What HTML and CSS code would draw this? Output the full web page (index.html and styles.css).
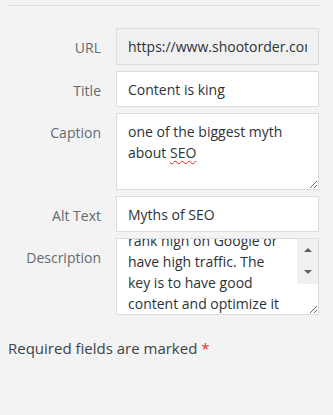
FILE: index.html
```html
<!DOCTYPE html>
<html lang="en">
<head>
    <meta charset="UTF-8">
    <meta name="viewport" content="width=device-width, initial-scale=1.0">
    <title>Attachment Details</title>
    <link rel="stylesheet" href="styles.css">
</head>
<body>
    <div class="settings">
        <div class="setting">
            <label class="name" for="url">URL</label>
            <input type="text" id="url" class="field field-readonly" value="https://www.shootorder.com/wp-content/uploads/myths-of-seo.jpg" readonly>
        </div>
        <div class="setting">
            <label class="name" for="title">Title</label>
            <input type="text" id="title" class="field" value="Content is king">
        </div>
        <div class="setting">
            <label class="name" for="caption">Caption</label>
            <div id="caption" class="field field-area">one of the biggest myth about <span class="typo">SEO</span></div>
        </div>
        <div class="setting">
            <label class="name" for="alt">Alt Text</label>
            <input type="text" id="alt" class="field" value="Myths of SEO">
        </div>
        <div class="setting">
            <label class="name" for="description">Description</label>
            <div class="field field-box">
                <textarea id="description" class="field-text">Stuffing keywords will not make your website rank high on Google or have high traffic. The key is to have good content and optimize it for search engines.</textarea>
                <div class="scrollbar">
                    <div class="scroll-track">
                        <span class="arrow arrow-up"></span>
                        <span class="arrow arrow-down"></span>
                    </div>
                </div>
            </div>
        </div>
    </div>

    <p class="required">Required fields are marked <span class="star">*</span></p>

    <script src="script.js"></script>
</body>
</html>
```

FILE: styles.css
```css
* {
    box-sizing: border-box;
}

body {
    margin: 0;
    background-color: #f3f3f3;
    font-family: 'Open Sans', sans-serif;
    font-size: 14px;
    color: #3c434a;
}

.settings {
    margin: 5px 12px 0 8px;
    padding-top: 22px;
    border-top: 1px solid #dcdcde;
    display: flex;
    flex-direction: column;
    gap: 6px;
}

.setting {
    display: grid;
    grid-template-columns: 93px 1fr;
    gap: 15px;
    padding-right: 2px;
}

.name {
    text-align: right;
    padding-top: 10px;
    line-height: 20px;
    color: #646970;
}

.field {
    width: 100%;
    height: 36px;
    margin: 0;
    padding: 0 11px;
    border: 1px solid #dcdcde;
    border-radius: 0;
    background-color: #fff;
    font-family: inherit;
    font-size: 14px;
    color: #2c3338;
    outline: none;
}

.field-readonly {
    height: 37px;
    background-color: #f0f0f1;
}

.field-area {
    height: 77px;
    padding: 7px 11px;
    line-height: 21px;
    resize: vertical;
    overflow: auto;
}

.field-box {
    display: flex;
    height: 77px;
    padding: 0;
    resize: vertical;
    overflow: hidden;
}

.field-text {
    flex: 1;
    min-width: 0;
    margin: 0;
    padding: 7px 11px;
    border: none;
    background: transparent;
    font-family: inherit;
    font-size: 14px;
    line-height: 21px;
    color: #2c3338;
    resize: none;
    overflow: hidden;
    outline: none;
}

.scrollbar {
    width: 21px;
    flex-shrink: 0;
}

.scroll-track {
    height: 45px;
    display: flex;
    flex-direction: column;
    justify-content: space-between;
    align-items: center;
    padding: 9px 0 10px;
    background-color: #f0f0f0;
}

.arrow {
    width: 0;
    height: 0;
    border-left: 4px solid transparent;
    border-right: 4px solid transparent;
}

.arrow-up {
    border-bottom: 4px solid #606060;
}

.arrow-down {
    border-top: 4px solid #606060;
}

.typo {
    text-decoration: underline wavy #e02020;
    text-decoration-thickness: 1px;
    text-underline-offset: 2px;
}

.required {
    margin: 23px 0 0 8px;
    font-size: 15px;
    line-height: 20px;
}

.star {
    color: #d63638;
}
```

FILE: script.js
```js
const description = document.getElementById("description");
description.scrollTop = 15.5 + 42;
```
